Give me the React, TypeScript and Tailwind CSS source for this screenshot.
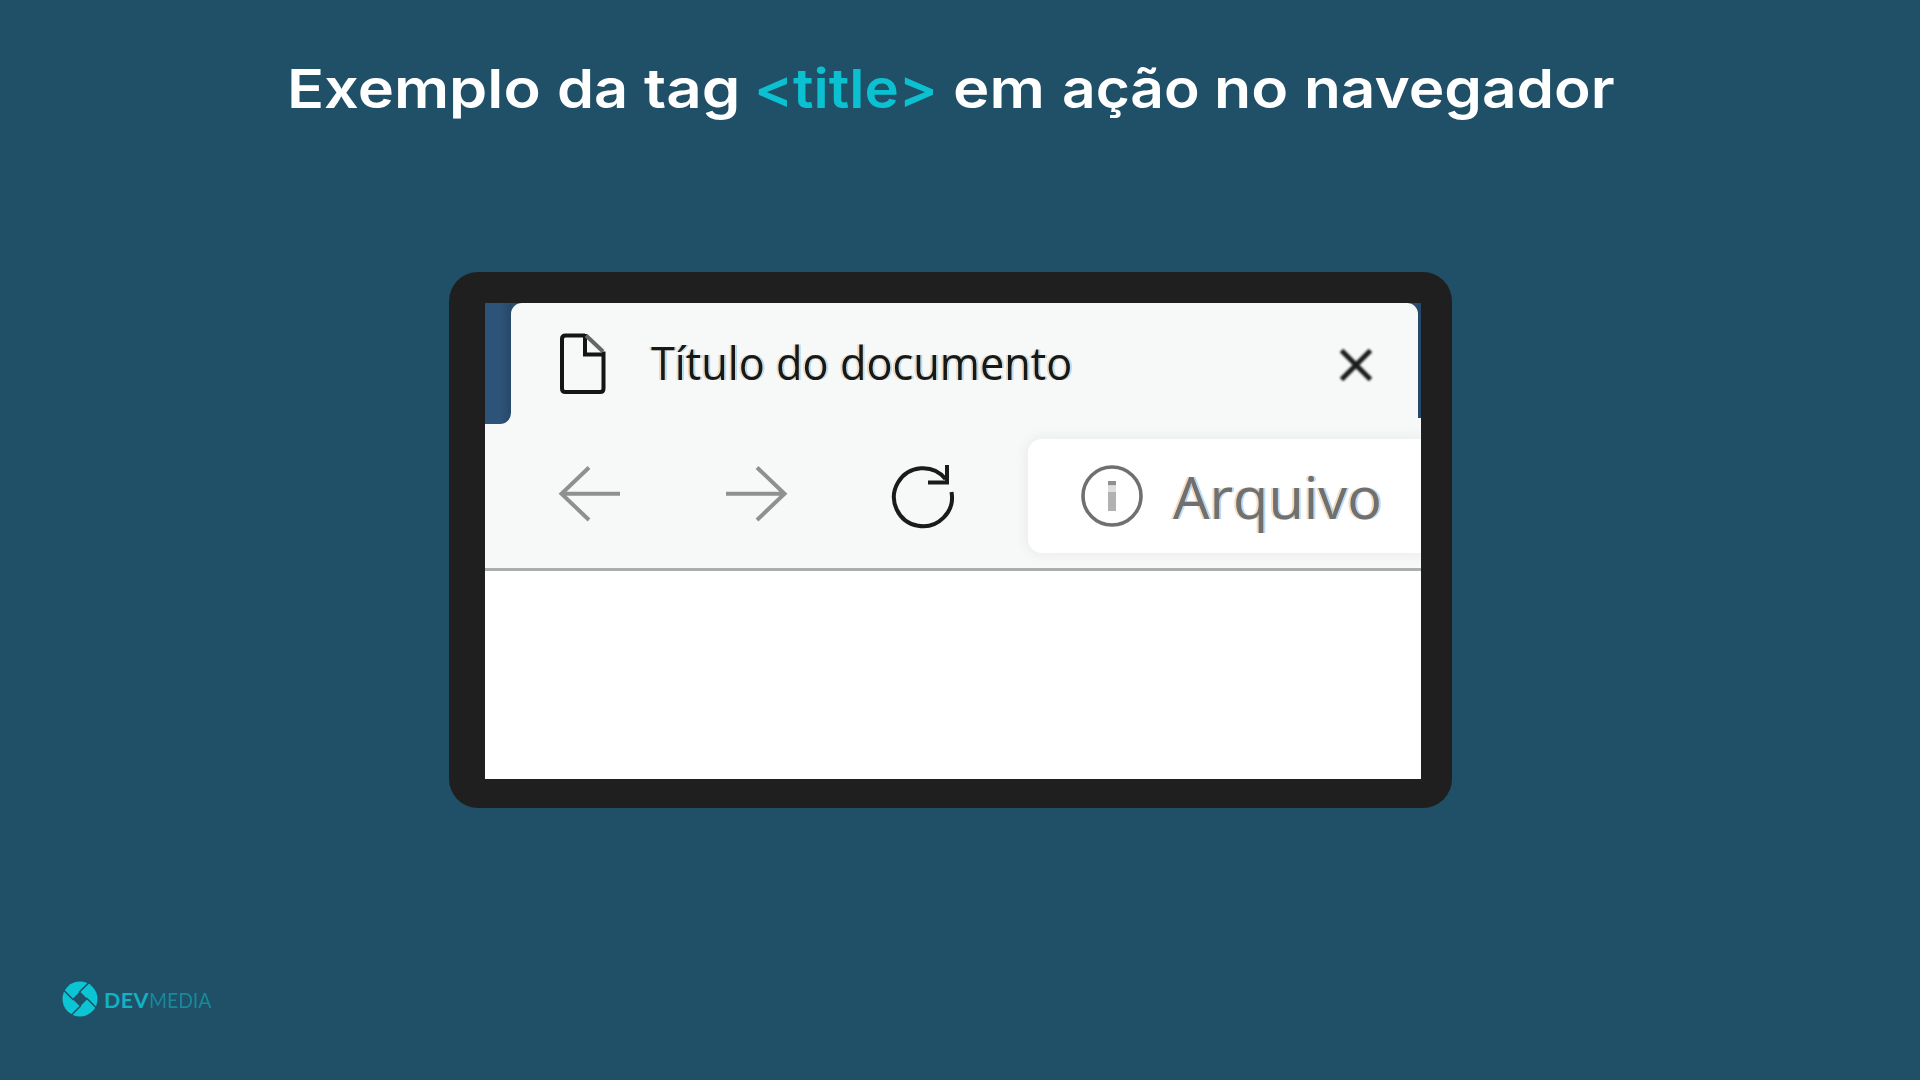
const title = [
  { text: "Exemplo", box: "w-[270px]", fit: "scale-x-[1.135]" },
  { text: "da", box: "w-[87px]", fit: "scale-x-[1.100]" },
  { text: "tag", box: "w-[110px]", fit: "scale-x-[1.145]" },
  { text: "<title>", box: "w-[199px] text-[#0bc0d0]", fit: "scale-x-[1.075]" },
  { text: "em", box: "w-[109px]", fit: "scale-x-[1.140]" },
  { text: "ação", box: "w-[152px]", fit: "scale-x-[1.085]" },
  { text: "no", box: "w-[90px]", fit: "scale-x-[1.125]" },
  { text: "navegador", box: "w-[310px]", fit: "scale-x-[1.115]" },
];

function Title() {
  return (
    <h1 className="flex h-[102px] items-center pl-[287px] font-['Inter'] text-[54px] leading-[64px] font-semibold whitespace-nowrap text-white">
      {title.map((w) => (
        <span key={w.text} className={w.box}>
          <span className={`inline-block origin-left ${w.fit}`}>{w.text}</span>
        </span>
      ))}
    </h1>
  );
}

function TabStrip() {
  return (
    <div className="flex h-[122px] bg-[#f7f9f8]">
      <div className="h-[121px] w-[26px] shrink-0 rounded-br-[11px] bg-linear-to-r from-[#2e5378] from-60% to-[#274868]" />
      <div className="min-w-0 flex-1 bg-[#2a4c6e]">
        <div className="flex h-full items-center rounded-t-[11px] bg-[#f7f9f8] pl-[46px]">
          <svg className="h-[64px] w-[50px] shrink-0 blur-[0.600px]" viewBox="0 0 50 64" fill="none" stroke="#151515" strokeWidth="4">
            <path d="M28 3.5H8.500Q5 3.500 5 7V56.500Q5 60 8.500 60H43Q46.500 60 46.500 56.500V19.500" />
            <path d="M28 2V22.500H47" />
            <path d="M29 3.500L46 19.500" stroke="#666" />
          </svg>
          <span className="-mt-[4px] ml-[44px] w-[688px] font-['Open_Sans'] text-[46px] leading-[60px] whitespace-nowrap text-[#181818] blur-[0.500px] [text-shadow:-2px_0_0.500px_#f0a04060,2px_0_0.500px_#40b0f060]">
            <span className="inline-block origin-left scale-x-[0.942]">Título do documento</span>
          </span>
          <svg className="h-[34px] w-[34px] shrink-0 blur-[0.800px]" viewBox="0 0 34 34" fill="none" stroke="#1b1b1b" strokeWidth="5">
            <path d="M2.500 3.500L31.500 32.500M31.500 3.500L2.500 32.500" />
          </svg>
        </div>
      </div>
      <div className="h-[115px] w-[3px] shrink-0 bg-[#28486b]" />
    </div>
  );
}

function Toolbar() {
  return (
    <div className="flex h-[146px] border-b-[3px] border-[#acaeae] bg-[#f7f9f8]">
      <svg className="mt-[38px] ml-[73.500px] h-[60px] w-[64px] shrink-0 blur-[0.600px]" viewBox="0 0 64 60" fill="none" stroke="#8f9090" strokeWidth="4">
        <path d="M3 30.700H62M31 4.500L3.500 30.700L31 57" />
      </svg>
      <svg className="mt-[38px] ml-[102px] h-[60px] w-[64px] shrink-0 blur-[0.600px]" viewBox="0 0 64 60" fill="none" stroke="#8f9090" strokeWidth="4">
        <path d="M2 30.700H61M33 4.500L60.500 30.700L33 57" />
      </svg>
      <svg className="mt-[36px] ml-[101.500px] h-[68px] w-[68px] shrink-0 blur-[0.600px]" viewBox="0 0 68 68" fill="none" stroke="#1b1b1b" strokeWidth="4">
        <path d="M61.500 31A29 29 0 1 0 61.500 36V31" stroke="none" />
        <path d="M61.500 31A29 29 0 1 1 55.500 18" />
        <path d="M57 4V21.500H38" />
      </svg>
      <div className="mt-[14px] ml-[70px] flex h-[114px] flex-1 items-center rounded-l-[14px] bg-white pl-[52px] shadow-[0_0_12px_4px_rgba(0,0,0,0.045)]">
        <svg className="h-[64px] w-[64px] shrink-0 blur-[0.600px]" viewBox="0 0 64 64">
          <circle cx="32" cy="32" r="29" fill="none" stroke="#707070" strokeWidth="3.600" />
          <path d="M28 28H36V47H28Z" fill="#b2b2b2" />
          <path d="M28 17H36V21.500H28Z" fill="#8f8f8f" />
          <path d="M28 21.500H36V28H28Z" fill="#dedede" />
        </svg>
        <span className="mt-[2px] ml-[29px] font-['Open_Sans'] text-[58px] leading-[70px] whitespace-nowrap text-[#707070] blur-[0.500px] [text-shadow:-2px_0_0.500px_#f0a04060,2px_0_0.500px_#40a0f060]">
          <span className="inline-block origin-left scale-x-[0.995]">Arquivo</span>
        </span>
      </div>
    </div>
  );
}

function Logo() {
  return (
    <div className="mt-[173px] ml-[62px] flex h-[36px] items-center">
      <svg className="h-[36px] w-[36px]" viewBox="0 0 36 36">
        <circle cx="18" cy="18" r="17.500" fill="#0bc5d4" />
        <path d="M18 10.500L25.500 18L18 25.500L10.500 18Z" fill="#205067" />
        <path d="M17 11.500L26.500 2M24.500 17L34 26.500M19 24.500L9.500 34M11.500 19L2 9.500" stroke="#205067" strokeWidth="1.600" />
      </svg>
      <div className="mt-[1px] ml-[6px] flex font-['Lato'] text-[21.500px] leading-[36px] whitespace-nowrap text-[#12b2c3]">
        <span className="w-[45px] font-bold tracking-[0.400px]">DEV</span>
        <span className="origin-left scale-x-[0.900] text-[#18899b]">MEDIA</span>
      </div>
    </div>
  );
}

export default function App() {
  return (
    <main className="flex h-[1080px] w-[1920px] flex-col overflow-hidden bg-[#205067] pt-[38px]">
      <Title />
      <section className="mt-[131.500px] ml-[449px] h-[536.500px] w-[1003px] rounded-[29px] bg-[#1f1f1f] pt-[31.500px] pr-[31px] pb-[29px] pl-[35.500px]">
        <div className="h-full overflow-hidden bg-white">
          <TabStrip />
          <Toolbar />
        </div>
      </section>
      <Logo />
    </main>
  );
}
